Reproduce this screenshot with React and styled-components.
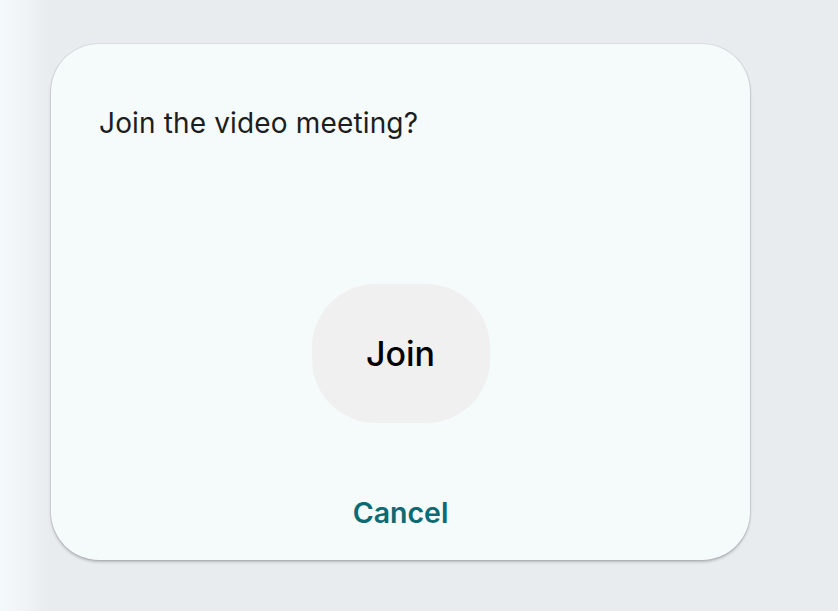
import React from 'react'
import styled, { createGlobalStyle } from 'styled-components'

const GlobalStyle = createGlobalStyle`
  html, body {
    margin: 0;
    padding: 0;
    background: #e8ecef;
    font-family: Inter, "Noto Sans", sans-serif;
  }
`

const Screen = styled.div`
  width: 838px;
  height: 611px;
  display: flex;
  background: linear-gradient(
    to right,
    #f4f9fa 0px,
    #f1f5f7 20px,
    #e8ecef 50px,
    #e8ecef 100%
  );
`

const Dialog = styled.div`
  box-sizing: border-box;
  margin: 44px 0 0 51px;
  width: 699px;
  height: 516px;
  border-radius: 48px;
  background: #f5fafb;
  box-shadow: 0 0 0 1px rgba(0, 0, 0, 0.06), 0 2px 3px rgba(0, 0, 0, 0.22);
  display: flex;
  flex-direction: column;
  align-items: center;
  padding: 63px 48px 0;
`

const Title = styled.p`
  align-self: stretch;
  margin: 0;
  font-size: 28px;
  letter-spacing: 0.15px;
  line-height: 32px;
  color: #1c1d1f;
  font-weight: 400;
`

const JoinButton = styled.button`
  margin-top: 145px;
  width: 178px;
  height: 139px;
  border: none;
  border-radius: 64px;
  background: #f0f0f0;
  font-family: inherit;
  font-size: 34px;
  font-weight: 500;
  color: #000;
  cursor: pointer;
`

const CancelButton = styled.button`
  margin-top: 72px;
  border: none;
  background: none;
  padding: 0;
  font-family: inherit;
  font-size: 28.5px;
  font-weight: 600;
  line-height: 36px;
  color: #0b6a72;
  cursor: pointer;
`

export default function App() {
  return (
    <>
      <GlobalStyle />
      <Screen>
        <Dialog>
          <Title>Join the video meeting?</Title>
          <JoinButton>Join</JoinButton>
          <CancelButton>Cancel</CancelButton>
        </Dialog>
      </Screen>
    </>
  )
}
